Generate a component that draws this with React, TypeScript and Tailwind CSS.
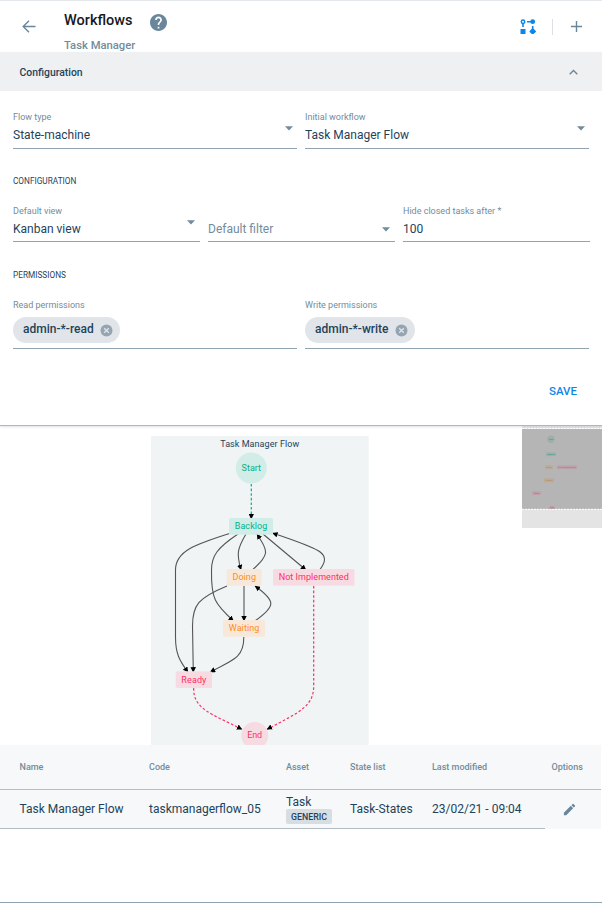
import React from "react";

type Tone = "teal" | "orange" | "pink";

const toneColors: Record<Tone, { fill: string; text: string }> = {
  teal: { fill: "#d2ece8", text: "#00b388" },
  orange: { fill: "#f8e8d9", text: "#ff8d1a" },
  pink: { fill: "#f7dbe2", text: "#ff2e63" },
};

function Caret({ className }: { className: string }) {
  return (
    <svg className={className} width="8" height="5" viewBox="0 0 8 5">
      <path d="M0 .3h8L4 4.500z" fill="#738c9c" />
    </svg>
  );
}

function Field(props: {
  label: string;
  value?: string;
  placeholder?: string;
  caret?: string;
  children?: React.ReactNode;
  className: string;
}) {
  return (
    <div className={`flex flex-col border-b border-[#8fa3b0] ${props.className}`}>
      <div className="h-3 text-[9px] leading-3 text-[#738c9c]">{props.label}</div>
      {props.children ?? (
        <div className="mt-[3px] flex h-5 items-start justify-between">
          <span className={`text-[12px] leading-[18px] ${props.value ? "text-[#1f435b]" : "text-[#738c9c]"}`}>
            {props.value ?? props.placeholder}
          </span>
          {props.caret && <Caret className={props.caret} />}
        </div>
      )}
    </div>
  );
}

function Chip({ text, className }: { text: string; className: string }) {
  return (
    <div className={`mt-[6px] flex h-[26px] items-center justify-between rounded-full bg-[#e1e5ea] pr-[7px] pl-[10px] ${className}`}>
      <span className="-mt-[2px] text-[12px] leading-[18px] font-medium whitespace-nowrap text-[#1f435b]">{text}</span>
      <svg width="13" height="13" viewBox="0 0 13 13">
        <circle cx="6.5" cy="6.5" r="6" fill="#94a5b1" />
        <path d="M4.2 4.2l4.6 4.6M8.8 4.2L4.2 8.8" stroke="#e1e5ea" strokeWidth="1.3" />
      </svg>
    </div>
  );
}

const nodes: { label: string; tone: Tone; x: number; y: number; w: number; width: number }[] = [
  { label: "Backlog", tone: "teal", x: 229, y: 92, w: 44, width: 32.5 },
  { label: "Doing", tone: "orange", x: 226.7, y: 143, w: 35, width: 23.5 },
  { label: "Not Implemented", tone: "pink", x: 273, y: 143, w: 81.5, width: 70 },
  { label: "Waiting", tone: "orange", x: 223, y: 194, w: 42, width: 30.5 },
  { label: "Ready", tone: "pink", x: 175.7, y: 245.2, w: 36.3, width: 25 },
];

const edges = [
  "M229.5 107.500C196 118 175.500 125 175.500 144L175.500 211C175.500 230 181 236 188 246.300",
  "M238 108C217 122 211.500 130 211.500 144C211 173 215 178 233.500 195",
  "M246 108C237 123 236.500 128 241 144",
  "M253 143.500C269 128 269 127 257 108",
  "M263 108L306 144",
  "M320 143.500C333 126 318 123 272.500 107",
  "M227 160C198 172 192.500 179 192.500 200L193.300 246.300",
  "M244 160L244 195",
  "M255.500 194.500C276 180 276 175 255 160",
  "M243.800 211C244 230 236 233 210 246",
];

function FlowGraph() {
  return (
    <svg className="block" width="602" height="319" viewBox="0 0 602 319">
      <defs>
        <marker id="arrow" viewBox="0 0 5 5" refX="4.700" refY="2.500" markerWidth="5.500" markerHeight="5.500" markerUnits="userSpaceOnUse" orient="auto">
          <path d="M0 0L5 2.500L0 5z" fill="#000" />
        </marker>
      </defs>
      <rect x="151" y="10" width="217.700" height="309" rx="1" fill="#f0f4f5" />
      <text x="259.700" y="21" textAnchor="middle" fontSize="9" fill="#1f435b" textLength="79">Task Manager Flow</text>
      <g fill="none" stroke="#555" strokeWidth="1.100">
        {edges.map((d) => (
          <path key={d} d={d} markerEnd="url(#arrow)" />
        ))}
      </g>
      <g fill="none" strokeWidth="1.200" strokeDasharray="2.600 2">
        <path d="M251.300 58V93" stroke="#00b388" markerEnd="url(#arrow)" />
        <path d="M193.700 262C193 283 212 288 242 303.300" stroke="#ff2e63" markerEnd="url(#arrow)" />
        <path d="M313.700 160V260C313.700 280 300 286 267 303.300" stroke="#ff2e63" markerEnd="url(#arrow)" />
      </g>
      <circle cx="251.300" cy="42" r="15.500" fill="#d2ece8" />
      <text x="251.300" y="45" textAnchor="middle" fontSize="9" fill="#00b388" textLength="19.500">Start</text>
      {nodes.map((n) => (
        <g key={n.label}>
          <rect x={n.x} y={n.y} width={n.w} height="16.700" rx="1.500" fill={toneColors[n.tone].fill} />
          <text x={n.x + n.w / 2} y={n.y + 11.300} textAnchor="middle" fontSize="9" fill={toneColors[n.tone].text} textLength={n.width}>
            {n.label}
          </text>
        </g>
      ))}
      <circle cx="254.700" cy="309.500" r="13.500" fill="#f7dbe2" />
      <text x="254.700" y="312" textAnchor="middle" fontSize="9" fill="#ff2e63" textLength="15">End</text>

      {/* Overview map of the whole flow */}
      <rect x="522" y="0" width="80" height="102" fill="#e4e4e4" />
      <rect x="522" y="3" width="80" height="80" fill="#b5b5b5" />
      <path d="M522 2.500H602M522 83.300H602" stroke="#fff" strokeWidth="1" strokeDasharray="2 1" />
      <g fontSize="2" textAnchor="middle">
        <circle cx="551" cy="13.300" r="3.700" fill="#9dafab" />
        <text x="551" y="14" fill="#21957b">Start</text>
        <rect x="546" y="26.300" width="10" height="3.800" fill="#9dafab" />
        <text x="551" y="29" fill="#21957b">Backlog</text>
        <rect x="545" y="39.300" width="8" height="3.800" fill="#b9aa99" />
        <text x="549" y="42" fill="#cb842f">Doing</text>
        <rect x="557" y="39.300" width="20" height="3.800" fill="#bda2a9" />
        <text x="567" y="42" fill="#c94b70" textLength="18">Not Implemented</text>
        <rect x="544" y="52.300" width="10" height="3.800" fill="#b9aa99" />
        <text x="549" y="55" fill="#cb842f">Waiting</text>
        <rect x="532" y="65.300" width="9" height="3.800" fill="#bda2a9" />
        <text x="536.500" y="68" fill="#c94b70">Ready</text>
        <path d="M548.800 83a3.200 3.200 0 1 1 6.400 0z" fill="#bda2a9" />
        <text x="552" y="82" fill="#c94b70">End</text>
      </g>
    </svg>
  );
}

const columns = "grid grid-cols-[149px_137px_64px_82px_113px_56px] w-[601px]";

export default function App() {
  return (
    <div className="flex h-[903px] w-[602px] flex-col overflow-hidden border-b border-[#8fa3b0] bg-white font-[Roboto,sans-serif] text-[#1f435b]">
      <header className="flex h-[52px] shrink-0 items-start border-t border-[#e5e8ec] bg-white">
        <svg className="mt-[19px] ml-[22px] shrink-0" width="14" height="14" viewBox="0 0 14 14" fill="none" stroke="#69869a" strokeWidth="1.4">
          <path d="M13.500 6.500H1.500M7 .7L1.200 6.500L7 12.300" />
        </svg>
        <div className="ml-7 flex w-[86px] flex-col whitespace-nowrap">
          <h1 className="mt-[10px] text-[14.500px] leading-5 font-medium text-[#16191c]">Workflows</h1>
          <p className="mt-2 text-[11.250px] leading-[14px] font-medium text-[#738c9c]">Task Manager</p>
        </div>
        <svg className="mt-[13px] shrink-0" width="17" height="17" viewBox="2 2 20 20" fill="#69869a">
          <path d="M12 2C6.480 2 2 6.480 2 12s4.480 10 10 10 10-4.480 10-10S17.520 2 12 2zm1 17h-2v-2h2v2zm2.070-7.750l-.9.920C13.450 12.900 13 13.500 13 15h-2v-.5c0-1.100.45-2.100 1.170-2.830l1.240-1.260c.37-.36.59-.86.59-1.410 0-1.100-.9-2-2-2s-2 .9-2 2H8c0-2.210 1.790-4 4-4s4 1.790 4 4c0 .88-.36 1.680-.93 2.250z" />
        </svg>
        <div className="mt-[18px] mr-[20px] ml-auto flex h-4 items-center">
          <svg width="16" height="16" viewBox="0 0 16 16" fill="#0b87ea">
            <circle cx="3" cy="2.700" r="1.700" fill="none" stroke="#0b87ea" strokeWidth="1.500" />
            <path d="M2.200 4.500h1.600V8H2.200zM7 2h4v1.500H7zM.5 10h5v5h-5zM11.900 7h1.600v4h-1.600zM11.700 9.700h2l2.300 2.500v.6L13.600 15h-1.800L9.500 12.800v-.6z" />
            <circle cx="12.700" cy="2.700" r="2.400" />
          </svg>
          <div className="ml-4 h-4 w-px bg-[#dce0e4]" />
          <svg className="-mt-px ml-[18px]" width="11" height="11" viewBox="0 0 11 11" stroke="#69869a" strokeWidth="1.400">
            <path d="M5.500 0v11M0 5.500h11" />
          </svg>
        </div>
      </header>

      <section className="z-10 flex h-[374px] shrink-0 flex-col border-b border-[#a9b8c4] bg-white shadow-[0_1px_2px_#a9b8c466]">
        <div className="flex h-[39px] shrink-0 items-center justify-between bg-[#eef0f2] pr-6 pl-[19.500px]">
          <h2 className="mt-[2px] text-[10.400px] leading-4 font-medium">Configuration</h2>
          <svg width="9" height="6" viewBox="0 0 9 6" fill="none" stroke="#69869a" strokeWidth="1.400">
            <path d="M.7 5.200l3.800-3.800 3.800 3.800" />
          </svg>
        </div>
        <div className="flex flex-col px-[13px]">
          <div className="mt-5 flex gap-2">
            <Field label="Flow type" value="State-machine" caret="mt-0 mr-1" className="h-[38px] w-[284px]" />
            <Field label="Initial workflow" value="Task Manager Flow" caret="mt-0 mr-1" className="h-[38px] w-[284px]" />
          </div>
          <h3 className="mt-[26px] text-[8.250px] leading-3">CONFIGURATION</h3>
          <div className="-mr-px mt-[18px] flex gap-2">
            <Field label="Default view" value="Kanban view" caret="mt-0 mr-[5px]" className="h-[37px] w-[187px]" />
            <Field label="" placeholder="Default filter" caret="mt-[7px] mr-[5px]" className="h-[37px] w-[187px]" />
            <Field label="Hide closed tasks after *" value="100" className="h-[37px] w-[187px]" />
          </div>
          <h3 className="mt-[27px] text-[8.250px] leading-3">PERMISSIONS</h3>
          <div className="mt-[18px] flex gap-2">
            <Field label="Read permissions" className="h-[50px] w-[284px]">
              <Chip text="admin-*-read" className="w-[107px]" />
            </Field>
            <Field label="Write permissions" className="h-[50px] w-[284px]">
              <Chip text="admin-*-write" className="w-[110px]" />
            </Field>
          </div>
          <button className="mt-[34px] self-end pr-3 text-[11.500px] leading-4 font-medium text-[#0b87ea]">SAVE</button>
        </div>
      </section>

      <FlowGraph />

      <section className="flex flex-col">
        <div className={`${columns} h-[45px] items-center border-b border-[#b2bdc6] bg-[#f6f8fa] pt-px text-[9px] font-medium text-[#738c9c]`}>
          <span className="pl-[19.500px]">Name</span>
          <span>Code</span>
          <span>Asset</span>
          <span>State list</span>
          <span>Last modified</span>
          <span className="pl-[6.500px]">Options</span>
        </div>
        <div className={`${columns} h-[39px] items-stretch bg-[#f6f8fa] text-[12px] leading-4 whitespace-nowrap`}>
          <span className="flex items-center border-b border-[#b2bdc6] pl-[19.500px]">Task Manager Flow</span>
          <span className="flex items-center border-b border-[#b2bdc6]">taskmanagerflow_05</span>
          <span className="flex flex-col items-start border-b border-[#b2bdc6] pt-1">
            <span>Task</span>
            <span className="-mt-px h-[15px] w-[46px] rounded-xs bg-[#d6dde3] text-center text-[8.750px] leading-[16px] font-medium">GENERIC</span>
          </span>
          <span className="flex items-center border-b border-[#b2bdc6]">Task-States</span>
          <span className="flex items-center border-b border-[#b2bdc6]">23/02/21 - 09:04</span>
          <span className="flex items-center pl-[17px]">
            <svg width="15" height="15" viewBox="0 0 24 24" fill="#69869a">
              <path d="M3 17.250V21h3.750L17.810 9.940l-3.750-3.750L3 17.250zM20.710 7.040c.39-.39.39-1.020 0-1.410l-2.340-2.340a.996.996 0 0 0-1.410 0l-1.830 1.830 3.750 3.750 1.830-1.830z" />
            </svg>
          </span>
        </div>
      </section>
    </div>
  );
}
